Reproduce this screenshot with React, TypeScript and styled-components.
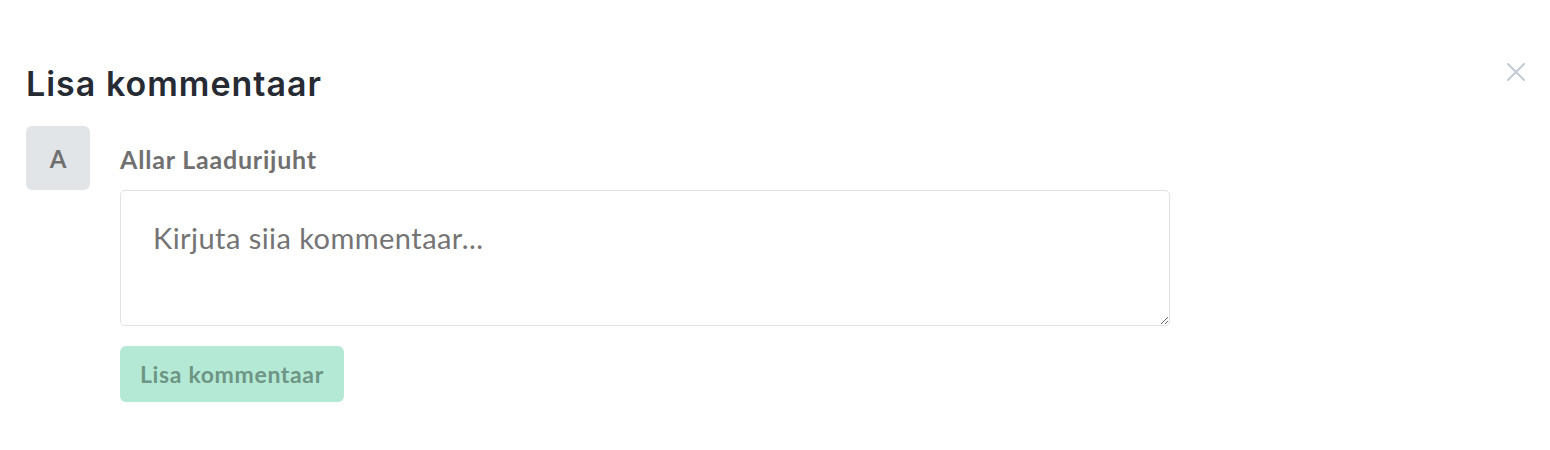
import React from "react";
import styled, { createGlobalStyle } from "styled-components";

const GlobalStyle = createGlobalStyle`
  html, body {
    margin: 0;
    padding: 0;
    background: #ffffff;
  }
  body {
    font-family: Lato, "Noto Sans", sans-serif;
  }
`;

const Modal = styled.div`
  position: relative;
  width: 1550px;
  height: 450px;
  box-sizing: border-box;
  padding: 62px 26px 0 26px;
  background: #ffffff;
`;

const Title = styled.h2`
  margin: 0 0 20px 0;
  font-family: Inter, "Noto Sans", sans-serif;
  font-weight: 600;
  font-size: 34px;
  line-height: 44px;
  letter-spacing: 1px;
  color: #262a33;
`;

const CloseButton = styled.button`
  position: absolute;
  top: 60px;
  right: 22px;
  width: 24px;
  height: 24px;
  padding: 0;
  border: none;
  background: transparent;
  color: #c3cad2;
  cursor: pointer;
  display: flex;
  align-items: center;
  justify-content: center;
`;

const CommentRow = styled.div`
  display: flex;
  align-items: flex-start;
  gap: 30px;
`;

const Avatar = styled.div`
  flex-shrink: 0;
  width: 64px;
  height: 64px;
  border-radius: 6px;
  background: #e2e5e8;
  color: #707070;
  font-family: Lato, sans-serif;
  font-weight: 700;
  font-size: 24px;
  display: flex;
  align-items: center;
  justify-content: center;
`;

const Body = styled.div`
  display: flex;
  flex-direction: column;
  padding-top: 18px;
`;

const AuthorName = styled.div`
  font-family: Lato, sans-serif;
  font-weight: 700;
  font-size: 25px;
  line-height: 30px;
  letter-spacing: 0.8px;
  color: #707070;
  margin-bottom: 16px;
`;

const CommentInput = styled.textarea`
  width: 1050px;
  height: 136px;
  box-sizing: border-box;
  padding: 28px 32px;
  border: 1.5px solid #e3e3e3;
  border-radius: 5px;
  font-family: Lato, sans-serif;
  font-size: 29px;
  line-height: 38px;
  letter-spacing: 0.45px;
  color: #333333;
  outline: none;
  resize: vertical;

  &::placeholder {
    color: #747474;
  }
`;

const SubmitButton = styled.button<{ disabled?: boolean }>`
  align-self: flex-start;
  margin-top: 20px;
  height: 56px;
  padding: 0 20px;
  border: none;
  border-radius: 6px;
  background: ${(p) => (p.disabled ? "#b4ead5" : "#3dcc96")};
  color: ${(p) => (p.disabled ? "#6e9585" : "#ffffff")};
  font-family: Lato, sans-serif;
  font-weight: 700;
  font-size: 23px;
  letter-spacing: 0.65px;
  cursor: ${(p) => (p.disabled ? "default" : "pointer")};
`;

function CloseIcon() {
  return (
    <svg width="20" height="20" viewBox="0 0 20 20" fill="none">
      <path
        d="M2 2L18 18M18 2L2 18"
        stroke="currentColor"
        strokeWidth="2"
        strokeLinecap="round"
      />
    </svg>
  );
}

export default function App() {
  const [text, setText] = React.useState("");

  return (
    <>
      <GlobalStyle />
      <Modal>
        <Title>Lisa kommentaar</Title>
        <CloseButton aria-label="Sulge">
          <CloseIcon />
        </CloseButton>
        <CommentRow>
          <Avatar>A</Avatar>
          <Body>
            <AuthorName>Allar Laadurijuht</AuthorName>
            <CommentInput
              placeholder="Kirjuta siia kommentaar..."
              value={text}
              onChange={(e) => setText(e.target.value)}
            />
            <SubmitButton disabled={text.trim() === ""}>
              Lisa kommentaar
            </SubmitButton>
          </Body>
        </CommentRow>
      </Modal>
    </>
  );
}
